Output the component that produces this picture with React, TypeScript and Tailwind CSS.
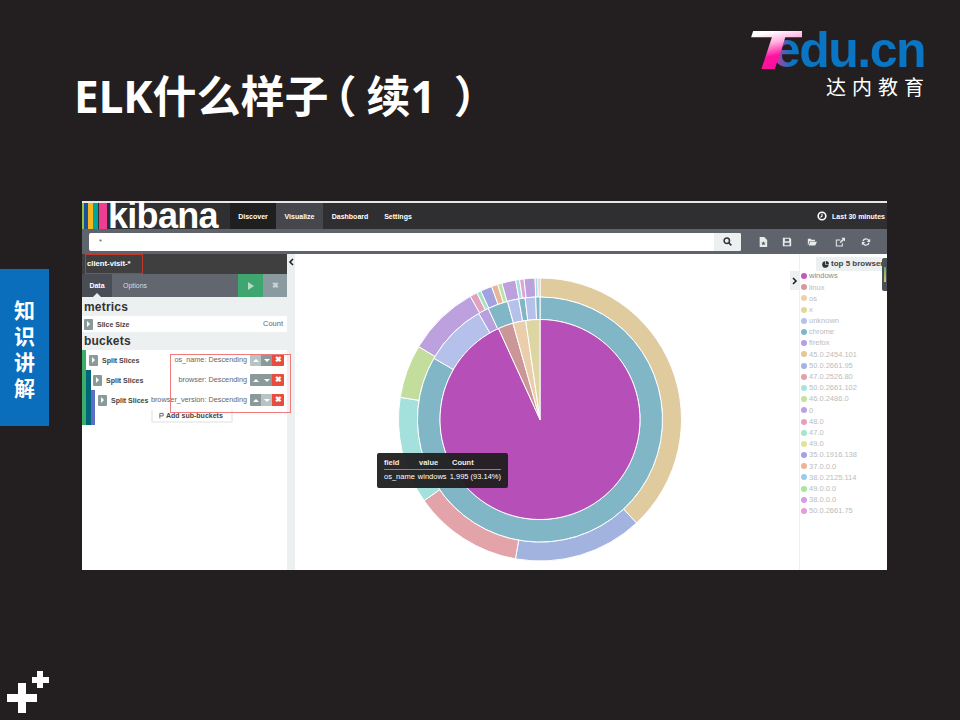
import React from "react";

const CX = 540, CY = 419.5;
function pt(r: number, a: number) {
  const t = (a * Math.PI) / 180;
  return [CX + r * Math.sin(t), CY - r * Math.cos(t)];
}
function arc(r0: number, r1: number, a0: number, a1: number) {
  const large = a1 - a0 > 180 ? 1 : 0;
  const [x0, y0] = pt(r1, a0);
  const [x1, y1] = pt(r1, a1);
  if (r0 === 0) return `M${CX} ${CY}L${x0} ${y0}A${r1} ${r1} 0 ${large} 1 ${x1} ${y1}Z`;
  const [x2, y2] = pt(r0, a1);
  const [x3, y3] = pt(r0, a0);
  return `M${x0} ${y0}A${r1} ${r1} 0 ${large} 1 ${x1} ${y1}L${x2} ${y2}A${r0} ${r0} 0 ${large} 0 ${x3} ${y3}Z`;
}

const inner: [number, number, string][] = [
  [0, 335.5, "#b74fb8"],
  [335.5, 344.3, "#cb9698"],
  [344.3, 351.8, "#eaceab"],
  [351.8, 360, "#ded6a2"],
];
const middle: [number, number, string][] = [
  [0, 300, "#80b6c6"],
  [300, 330, "#b5c1ea"],
  [330, 335, "#b7a0dd"],
  [335, 344.6, "#80b6c6"],
  [344.6, 350, "#b5c1ea"],
  [350, 353, "#80b6c6"],
  [353, 358, "#b5c1ea"],
  [358, 360, "#80b6c6"],
];
const outer: [number, number, string][] = [
  [0, 137, "#e0cb9f"],
  [137, 190, "#a2b3e0"],
  [190, 235, "#e2a4a8"],
  [235, 279, "#a4e0dc"],
  [279, 301, "#c3dd9d"],
  [301, 330.5, "#bca1de"],
  [330.5, 333.5, "#e0a2bd"],
  [333.5, 335.3, "#a5e3c4"],
  [335.3, 340, "#a3a2e0"],
  [340, 342.6, "#e5b59b"],
  [342.6, 344.4, "#bde3a6"],
  [344.4, 350.1, "#bca1de"],
  [350.1, 351.7, "#a4e0dc"],
  [351.7, 353.5, "#e0a2d8"],
  [353.5, 358, "#bca1de"],
  [358, 359.2, "#a4e0dc"],
  [359.2, 360, "#e0a2d8"],
];

const legend: [string, string, string][] = [
  ["windows", "#c455c6", "#8a8a8a"],
  ["linux", "#d69a9c", "#bcbcbc"],
  ["os", "#f0d0aa", "#bcbcbc"],
  ["x", "#e2d89a", "#bcbcbc"],
  ["unknown", "#b6c2ee", "#bcbcbc"],
  ["chrome", "#82b6c6", "#bcbcbc"],
  ["firefox", "#b39fe2", "#bcbcbc"],
  ["45.0.2454.101", "#e2c993", "#bcbcbc"],
  ["50.0.2661.95", "#a2b3e6", "#bcbcbc"],
  ["47.0.2526.80", "#e6a0a4", "#bcbcbc"],
  ["50.0.2661.102", "#a4e4dc", "#bcbcbc"],
  ["46.0.2486.0", "#c3e29a", "#bcbcbc"],
  ["0", "#bca1e2", "#bcbcbc"],
  ["48.0", "#e6a0bc", "#bcbcbc"],
  ["47.0", "#a4e6c8", "#bcbcbc"],
  ["49.0", "#e2e29a", "#bcbcbc"],
  ["35.0.1916.138", "#a3a2e6", "#bcbcbc"],
  ["37.0.0.0", "#eab49a", "#bcbcbc"],
  ["38.0.2125.114", "#9accea", "#bcbcbc"],
  ["49.0.0.0", "#a8e69a", "#bcbcbc"],
  ["38.0.0.0", "#d49ce6", "#bcbcbc"],
  ["50.0.2661.75", "#e69cd8", "#bcbcbc"],
];

function Handle() {
  return (
    <span className="flex h-[11px] w-[9px] shrink-0 items-center justify-center rounded-[1px] bg-[#8a9a9b]">
      <span className="h-0 w-0 border-y-[3px] border-l-[3px] border-y-transparent border-l-white" />
    </span>
  );
}

function Ctrl({ upLight, downLight }: { upLight?: boolean; downLight?: boolean }) {
  const light = "flex h-[12px] w-[11px] items-center justify-center bg-[#b8c4c4]";
  const dark = "flex h-[12px] w-[11px] items-center justify-center bg-[#8a9a9b]";
  return (
    <span className="ml-[3px] flex shrink-0">
      <span className={`${upLight ? light : dark} rounded-l-[1px]`}>
        <span className="h-0 w-0 border-x-[3px] border-b-[3px] border-x-transparent border-b-white" />
      </span>
      <span className={downLight ? light : dark}>
        <span className="h-0 w-0 border-x-[3px] border-t-[3px] border-x-transparent border-t-white" />
      </span>
      <span className="flex h-[12px] w-[12px] items-center justify-center rounded-r-[1px] bg-[#e74c3c] text-[8px] font-bold leading-none text-white">✖</span>
    </span>
  );
}

function Bucket({ label, indent }: { label: string; indent: string }) {
  return (
    <div className={`flex h-[20px] items-center pr-[3px] ${indent}`}>
      <Handle />
      <span className="ml-[4px] whitespace-nowrap text-[7px] font-bold text-[#444]">Split Slices</span>
      <span className="ml-auto whitespace-nowrap text-[7.3px] text-[#666]">{label}</span>
      <Ctrl upLight={label.startsWith("os")} downLight={label.startsWith("browser_")} />
    </div>
  );
}

function Tool({ className, children }: { className: string; children: React.ReactNode }) {
  return <svg className={className} width="10" height="10" viewBox="0 0 12 12" fill="#e8eaec">{children}</svg>;
}

export default function App() {
  return (
    <div className="relative h-[720px] w-[960px] overflow-hidden bg-[#231f20] font-['Liberation_Sans','Noto_Sans_CJK_SC',sans-serif]">
      {/* header */}
      <div className="flex h-[201px] items-start justify-between pl-[74px] pr-[35px]">
        <h1 className="mt-[70px] whitespace-nowrap font-['Noto_Sans','Noto_Sans_CJK_SC',sans-serif] text-[44px] font-bold leading-[52px] text-white">
          ELK什么样子<span className="ml-[6px] mr-[10px] [font-feature-settings:'halt']">（</span>续1<span className="ml-[18px]">）</span>
        </h1>
        <div className="mt-[29px] flex w-[176px] flex-col items-end">
          <div className="flex h-[43px] items-end leading-none">
            <span className="relative z-10 mr-[-29px] inline-block origin-right scale-x-[1.7] bg-[linear-gradient(160deg,#ffffff_15%,#ffb3e0_35%,#ff12a0_60%,#ff0a9b_100%)] bg-clip-text pr-[2px] text-[55px] font-bold italic leading-[43px] tracking-[-2px] text-transparent">T</span>
            <span className="bg-[linear-gradient(90deg,#e0309f,#0a75c2_70%)] bg-clip-text text-[50px] font-bold leading-[43px] tracking-[-1.5px] text-transparent">e</span>
            <span className="text-[50px] font-bold leading-[43px] tracking-[-1.5px] text-[#0a75c2]">du.cn</span>
          </div>
          <div className="mr-[-5px] mt-[4px] font-['Noto_Sans_CJK_SC',sans-serif] text-[20px] leading-[22px] tracking-[6px] text-white">达内教育</div>
        </div>
      </div>

      {/* kibana screenshot */}
      <div className="ml-[82px] flex h-[369px] w-[805px] flex-col border-t-2 border-[#e8e8e8] bg-white text-[7.5px] leading-none">
        <nav className="flex h-[26px] shrink-0 items-stretch bg-[#2f2f31] text-[7px] text-white">
          <div className="flex w-[26px] shrink-0">
            <span className="w-[2px] bg-[#8cc63f]" />
            <span className="w-[4px] bg-[#1e4f9c]" />
            <span className="w-[5px] bg-[#f5b81c]" />
            <span className="w-[5px] bg-[#00a69c]" />
            <span className="w-[1px] bg-[#333]" />
            <span className="w-[8px] bg-[#ef3d8f]" />
          </div>
          <div className="w-[122px] shrink-0 text-[36px] font-bold leading-[25px] tracking-[-0.7px]">kibana</div>
          <div className="flex w-[46px] items-center justify-center bg-[#1f1f1f] font-bold">Discover</div>
          <div className="flex w-[47px] items-center justify-center bg-[#45474c] font-bold">Visualize</div>
          <div className="flex w-[54px] items-center justify-center font-bold">Dashboard</div>
          <div className="flex w-[42px] items-center justify-center font-bold">Settings</div>
          <div className="ml-auto flex items-center gap-[5px] pr-[2px] font-bold">
            <svg width="10" height="10" viewBox="0 0 10 10" fill="none" stroke="#fff" strokeWidth="1.6">
              <circle cx="5" cy="5" r="3.8" />
              <path d="M5 2.8V5.2L3.4 6.4" strokeWidth="1.1" />
            </svg>
            Last 30 minutes
          </div>
        </nav>

        <div className="flex h-[25px] shrink-0 items-center bg-[#5f636c] pl-[7px]">
          <div className="flex h-[18px] w-[652px] items-stretch overflow-hidden rounded-[2px] bg-white">
            <span className="pl-[10px] pt-[5px] text-[#555]">*</span>
            <span className="ml-auto flex w-[27px] items-center justify-center bg-[#ecf0f1]">
              <svg width="9" height="9" viewBox="0 0 10 10" fill="none" stroke="#333" strokeWidth="1.7">
                <circle cx="4.2" cy="4.2" r="3" />
                <path d="M6.5 6.5L9.3 9.3" />
              </svg>
            </span>
          </div>
          <div className="flex items-center">
            <Tool className="ml-[17px]"><path d="M2 0h5.5L11 3.5V12H2zM6.5 5l.8 1.7 1.9.2-1.4 1.3.4 1.8-1.7-.9-1.7.9.4-1.8L3.8 6.9l1.9-.2z" fillRule="evenodd" /></Tool>
            <Tool className="ml-[14px]"><path d="M1 1h8.5L11 2.5V11H1zM3.5 2v3h5V2zM3 7v3h6V7z" fillRule="evenodd" /></Tool>
            <Tool className="ml-[15px]"><path d="M1 2h3.5l1 1.2H9.5V5H3L1.5 9.5H1zM3.6 5.8H12L9.8 10.2H2.2z" /></Tool>
            <Tool className="ml-[18px]"><path d="M1 3h5.5v1.2H2.2v6h6V7.5h1.2v3.9H1zM7.5.8H12v4.5l-1.5-1.5L7 7.2 5.8 6l3.4-3.5z" /></Tool>
            <Tool className="ml-[16px]"><path d="M6 1.5a4.5 4.5 0 0 1 3.6 1.8L11 2v4H7l1.5-1.5A2.8 2.8 0 0 0 3.3 5.2H1.6A4.5 4.5 0 0 1 6 1.5zM1 6h4L3.5 7.5a2.8 2.8 0 0 0 5.2-.7h1.7A4.5 4.5 0 0 1 2.4 8.7L1 10z" /></Tool>
          </div>
        </div>

        <div className="flex min-h-0 flex-1">
          {/* sidebar */}
          <aside className="relative flex w-[205px] shrink-0 flex-col bg-white">
            <div className="flex h-[20px] shrink-0 items-center bg-[#3f3f3f] pl-[5px] text-[7.7px] font-bold text-white">client-visit-*</div>
            <div className="flex h-[23px] shrink-0 items-stretch bg-[#62666f] text-[7px] text-white">
              <div className="relative flex w-[30px] items-center justify-center bg-[#4a4d55] font-bold">
                Data
                <span className="absolute bottom-0 left-[11px] h-0 w-0 border-x-[4px] border-b-[4px] border-x-transparent border-b-[#ecf0f1]" />
              </div>
              <div className="flex w-[46px] items-center justify-center text-[#d8dadd]">Options</div>
              <div className="ml-auto flex w-[25px] items-center justify-center bg-[#3fa670]">
                <span className="h-0 w-0 border-y-[4px] border-l-[6px] border-y-transparent border-l-[#b9dcc7]" />
              </div>
              <div className="flex w-[24px] items-center justify-center bg-[#8a9a9f] text-[8px] font-bold text-[#ccd3d5]">✖</div>
            </div>
            <div className="bg-[#ecf0f1] pb-[2px] pt-[3px] text-[#444]">
              <h2 className="pl-[2px] text-[12px] font-bold leading-[15px] tracking-[0.2px] text-[#333]">metrics</h2>
              <div className="mt-[1px] flex h-[16px] items-center bg-white pl-[2px] pr-[4px]">
                <Handle />
                <span className="ml-[4px] text-[7px] font-bold">Slice Size</span>
                <span className="ml-auto text-[#666]">Count</span>
              </div>
              <h2 className="mt-[2px] pl-[2px] text-[12px] font-bold leading-[14px] tracking-[0.2px] text-[#333]">buckets</h2>
            </div>
            <div className="border-l-[4px] border-[#3cae6a]">
              <Bucket label="os_name: Descending" indent="pl-[3px]" />
              <div className="border-l-[5px] border-[#00657a]">
                <Bucket label="browser: Descending" indent="pl-[2px]" />
                <div className="border-l-[4px] border-[#5a6fc4] pb-[2px]">
                  <Bucket label="browser_version: Descending" indent="pl-[3px]" />
                  <div className="ml-[56px] flex h-[13px] w-[82px] items-center justify-start gap-[2px] rounded-b-[2px] border-2 border-t-0 border-[#ecf0f1] pl-[6px] text-[7px] font-bold text-[#444]">
                    <svg className="shrink-0" width="5" height="7" viewBox="0 0 6 7" fill="none" stroke="#555" strokeWidth="1"><path d="M1 7V1h4v3H1" /></svg>
                    Add sub-buckets
                  </div>
                </div>
              </div>
            </div>
            {/* red annotations over the screenshot */}
            <span className="absolute left-[3px] top-0 h-[20px] w-[58px] border border-[#c0392b]" />
            <span className="absolute left-[88px] top-[100px] z-10 h-[59px] w-[121px] border border-[#ef7b7b]" />
          </aside>

          {/* divider */}
          <div className="flex w-[8px] shrink-0 items-start justify-center bg-[#ecf0f1] pt-[4px]">
            <svg width="6" height="8" viewBox="0 0 6 8" fill="none" stroke="#222" strokeWidth="1.6"><path d="M5 1L2 4l3 3" /></svg>
          </div>

          {/* chart + legend */}
          <div className="relative min-w-0 flex-1">
            <div className="absolute right-[5px] top-[3px] flex h-[14px] w-[66px] items-center gap-[2px] overflow-hidden bg-[#ecf0f1] pl-[6px] text-[8px] font-bold text-[#444]">
              <svg className="shrink-0" width="7" height="7" viewBox="0 0 8 8" fill="#333"><path d="M3.6.4v4h4A3.7 3.7 0 1 1 3.6.4zM4.4 0A3.7 3.7 0 0 1 8 3.6H4.4z" /></svg>
              <span className="whitespace-nowrap">top 5 browser</span>
            </div>
            <div className="absolute right-0 top-[4px] flex h-[33px] w-[5px] justify-center rounded-l-[2px] bg-[#4a5058] py-[9px]">
              <span className="w-[2px] bg-gradient-to-b from-[#5fa86f] to-[#d9c45a]" />
            </div>
            <div className="flex h-full">
              <div className="flex min-w-0 flex-1 overflow-hidden">
                <svg className="block" width="495" height="316" viewBox="295 254 495 316">
                  {[...outer.map((s) => ({ s, r0: 122.5, r1: 141.5 })), ...middle.map((s) => ({ s, r0: 100, r1: 122.5 })), ...inner.map((s) => ({ s, r0: 0, r1: 100 }))].map(({ s, r0, r1 }, i) => (
                    <path key={i} d={arc(r0, r1, s[0], s[1])} fill={s[2]} stroke="#fff" strokeWidth="1" />
                  ))}
                </svg>
              </div>
              <div className="flex h-[19px] w-[9px] shrink-0 translate-y-[17px] items-center justify-center bg-[#ecf0f1]">
                <svg width="6" height="8" viewBox="0 0 6 8" fill="none" stroke="#222" strokeWidth="1.6"><path d="M1 1l3 3-3 3" /></svg>
              </div>
              <ul className="w-[88px] shrink-0 border-l border-[#ecf0f1] pl-[1px] pt-[16.5px]">
                {legend.map(([name, c, tc]) => (
                  <li key={name} className="flex h-[11.2px] items-center gap-[2px] whitespace-nowrap" style={{ color: tc }}>
                    <span className="h-[6px] w-[6px] rounded-full" style={{ background: c }} />
                    {name}
                  </li>
                ))}
              </ul>
            </div>
            {/* tooltip */}
            <div className="absolute left-[82px] top-[199px] h-[35px] w-[131px] rounded-[2px] bg-[#1f1f1f]/95 px-[7px] pt-[6px] font-bold text-white">
              <div className="flex h-[11px] items-center border-b border-[#888] pb-[2px] text-[#eee]">
                <span className="w-[35px]">field</span>
                <span className="w-[33px]">value</span>
                <span>Count</span>
              </div>
              <div className="flex h-[14px] items-center whitespace-nowrap font-normal text-white">
                <span className="w-[35px]">os_name</span>
                <span className="w-[33px]">windows</span>
                <span>1,995 (93.14%)</span>
              </div>
            </div>
          </div>
        </div>
      </div>

      {/* left tab */}
      <div className="absolute left-0 top-[269px] flex h-[157px] w-[49px] items-center justify-center bg-[#0a6ebd] pt-[1px] font-['Noto_Sans_CJK_SC',sans-serif] text-[21px] font-bold leading-[26px] text-white">
        <span className="w-[22px] text-center">知识讲解</span>
      </div>

      {/* plus marks */}
      <svg className="absolute bottom-0 left-0" width="60" height="60" viewBox="0 0 60 60" fill="#fff">
        <rect x="18" y="23" width="8" height="30" />
        <rect x="7" y="34" width="30" height="8" />
        <rect x="37" y="11" width="6" height="17" />
        <rect x="32" y="17" width="17" height="6" />
      </svg>
    </div>
  );
}
